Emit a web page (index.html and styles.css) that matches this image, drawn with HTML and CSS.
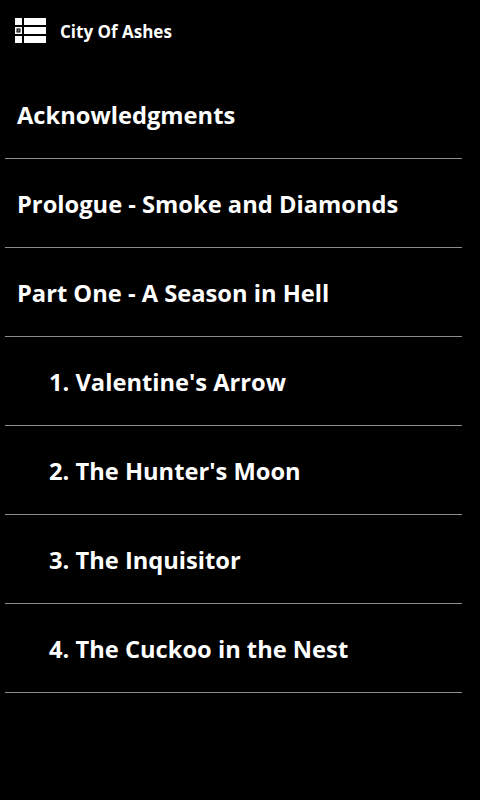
FILE: index.html
```html
<!DOCTYPE html>
<html>
<head>
    <title>City Of Ashes</title>
    <link rel="stylesheet" href="styles.css">
</head>
<body>
    <div class="header">
        <svg class="toc-icon" width="31" height="26" viewBox="0 0 31 26">
            <rect x="0" y="0" width="7" height="7" fill="#fff"/>
            <rect x="9" y="0" width="22" height="7" fill="#fff"/>
            <rect x="0" y="9" width="7" height="7" fill="#fff"/>
            <rect x="1.5" y="10.5" width="4" height="4" fill="#000"/>
            <rect x="2.5" y="11.5" width="2" height="2" fill="#888"/>
            <rect x="9" y="9" width="22" height="7" fill="#fff"/>
            <rect x="0" y="18" width="7" height="7" fill="#fff"/>
            <rect x="9" y="18" width="22" height="7" fill="#fff"/>
        </svg>
        <span class="book-title">City Of Ashes</span>
    </div>
    <ul class="chapters">
        <li class="chapter">Acknowledgments</li>
        <li class="chapter">Prologue - Smoke and Diamonds</li>
        <li class="chapter">Part One - A Season in Hell</li>
        <li class="chapter sub">1. Valentine's Arrow</li>
        <li class="chapter sub">2. The Hunter's Moon</li>
        <li class="chapter sub">3. The Inquisitor</li>
        <li class="chapter sub">4. The Cuckoo in the Nest</li>
    </ul>
</body>
</html>
```

FILE: styles.css
```css
body {
    margin: 0;
    background: #000;
    color: #fff;
    font-family: "Open Sans", "Liberation Sans", sans-serif;
    width: 480px;
    height: 800px;
    overflow: hidden;
}

.header {
    display: flex;
    align-items: center;
    height: 62px;
    padding-left: 15px;
}

.book-title {
    margin-left: 14px;
    font-size: 17px;
    font-weight: 700;
}

.chapters {
    list-style: none;
    margin: 8px 0 0 5px;
    padding: 0;
    width: 457px;
}

.chapter {
    height: 87px;
    padding-top: 1px;
    display: flex;
    align-items: center;
    padding-left: 12px;
    border-bottom: 1px solid #8c8c8c;
    font-size: 23.7px;
    font-weight: 700;
}

.chapter.sub {
    padding-left: 44px;
}
```
